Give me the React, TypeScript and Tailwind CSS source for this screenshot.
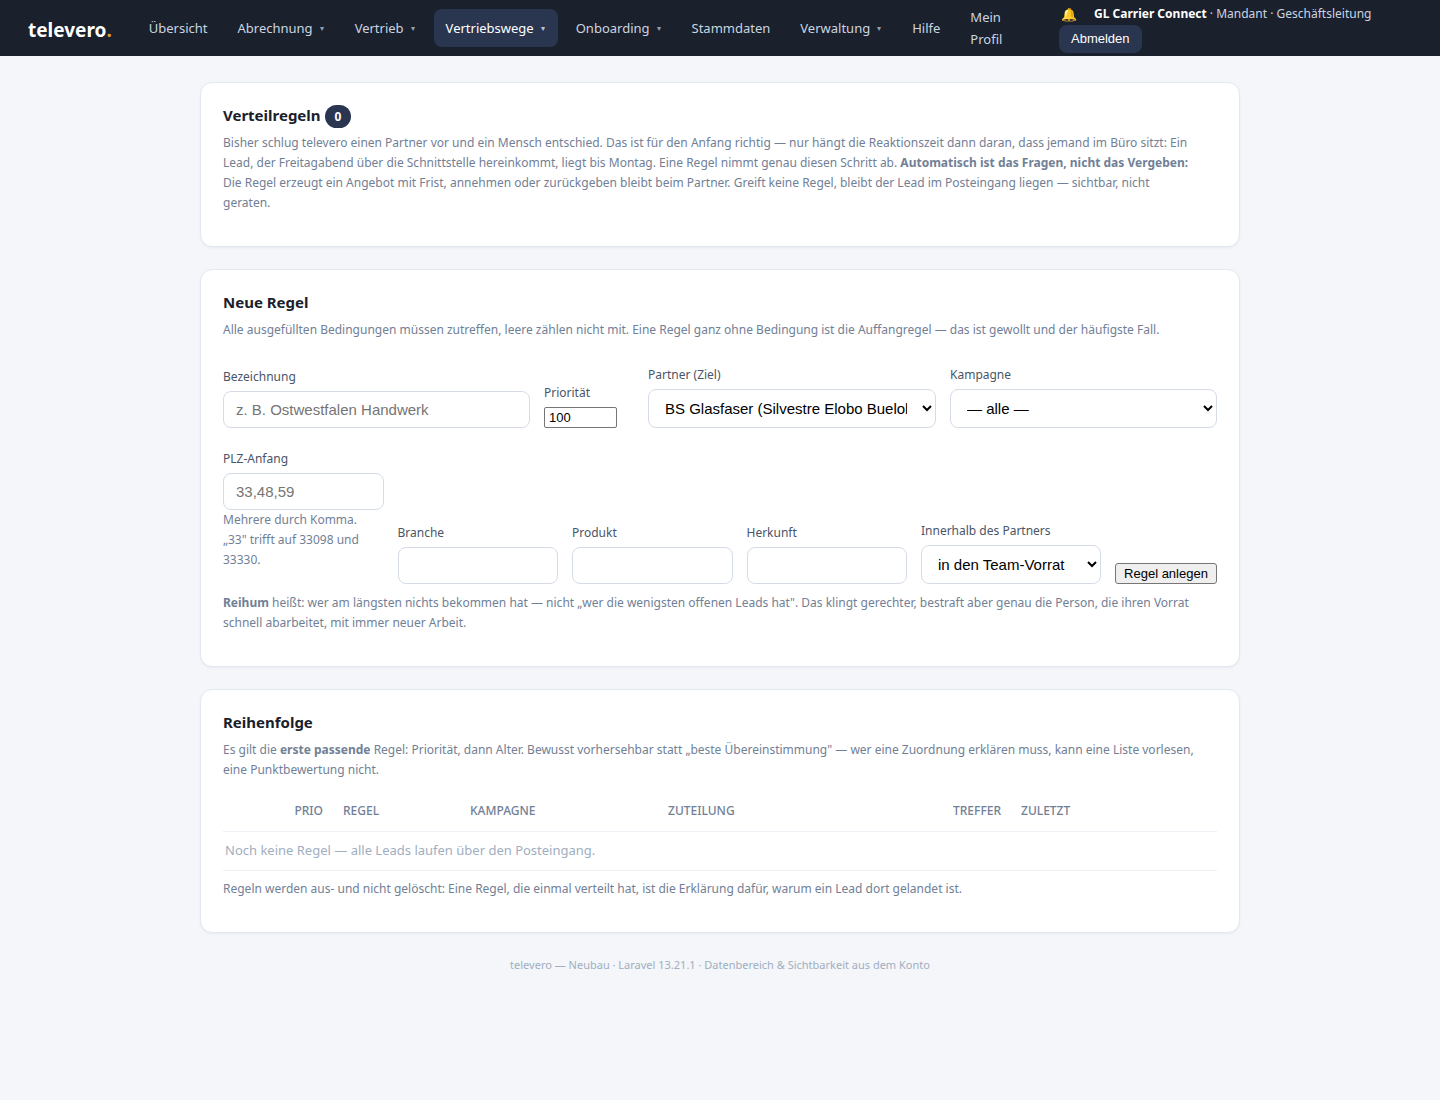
import React, { useState } from 'react';

interface NavItem {
  label: string;
  menu?: boolean;
  active?: boolean;
}

const navItems: NavItem[] = [
  { label: 'Übersicht' },
  { label: 'Abrechnung', menu: true },
  { label: 'Vertrieb', menu: true },
  { label: 'Vertriebswege', menu: true, active: true },
  { label: 'Onboarding', menu: true },
  { label: 'Stammdaten' },
  { label: 'Verwaltung', menu: true },
  { label: 'Hilfe' },
  { label: 'Mein Profil' },
];

const control = 'w-full border border-[#d5dbe7] rounded-lg bg-white font-["Liberation_Sans",Arial,sans-serif] text-[15px] text-black';
const textInput = `${control} h-[37px] px-3 placeholder:text-[#757575]`;
const selectInput = `${control} h-[39px] px-3`;

const Header: React.FC = () => (
  <header className="bg-[#1a202c] min-h-14 px-7 flex items-center text-[#cbd5e0]">
    <a href="#" className="text-[19px] leading-6 font-bold text-white mr-[25px] mt-1">
      televero<span className="text-[#d69e2e]">.</span>
    </a>
    <nav className="flex items-center gap-1.5 text-[13px] leading-[22px]">
      {navItems.map(item =>
        item.menu ? (
          <button
            key={item.label}
            className={`flex items-center gap-1.5 rounded-lg px-3 py-2 ${item.active ? 'bg-[#2a3550] text-white' : ''}`}
          >
            {item.label}
            <span className="w-1.5 text-[8px] opacity-70">▾</span>
          </button>
        ) : (
          <a key={item.label} href="#" className={`px-3 ${item.label === 'Mein Profil' ? 'w-16' : ''}`}>
            {item.label}
          </a>
        )
      )}
    </nav>
    <div className="ml-auto w-[353px] text-[12px] leading-5">
      <div className="flex items-center h-[22px]">
        <a href="#" aria-label="Benachrichtigungen" className="w-[35px] pl-0.5 text-[13px]">🔔</a>
        <span>
          <b className="text-white">GL Carrier Connect</b> · Mandant · Geschäftsleitung
        </span>
      </div>
      <button className='block h-7 px-3 rounded-lg bg-[#2a3550] text-white font-["Liberation_Sans",Arial,sans-serif] text-[13px]'>
        Abmelden
      </button>
    </div>
  </header>
);

const Card: React.FC<{ title: string; count?: number; children: React.ReactNode }> = ({ title, count, children }) => (
  <section className="bg-white border border-[#e2e8f0] rounded-xl px-[22px] pt-[22px] pb-[33px] shadow-[0_1px_2px_rgba(26,32,44,0.05)]">
    <h2 className="flex items-start gap-1 h-[23px] mb-[5px] text-[15px] leading-[21px] font-bold text-[#1a202c]">
      {title}
      {count !== undefined && (
        <span className="rounded-full bg-[#2a3550] text-white text-[12px] leading-[23px] px-2.5">{count}</span>
      )}
    </h2>
    {children}
  </section>
);

const Hint: React.FC<{ children: React.ReactNode }> = ({ children }) => (
  <p className="text-[12px] leading-5 text-[#718096]">{children}</p>
);

const Field: React.FC<{ id: string; label: string; children: React.ReactNode }> = ({ id, label, children }) => (
  <div className="min-w-0">
    <label htmlFor={id} className="block text-[12px] leading-5 mb-1 text-[#4a5568]">
      {label}
    </label>
    {children}
  </div>
);

const RuleForm: React.FC = () => {
  const [priority, setPriority] = useState('100');

  return (
    <form onSubmit={e => e.preventDefault()} className="mt-[25px] mb-[9px]">
      <div className="grid grid-cols-[307fr_90px_288fr_267fr] gap-3.5 items-end mb-[21px]">
        <Field id="name" label="Bezeichnung">
          <input id="name" type="text" placeholder="z. B. Ostwestfalen Handwerk" className={textInput} />
        </Field>
        <Field id="priority" label="Priorität">
          <input
            id="priority"
            type="number"
            value={priority}
            onChange={e => setPriority(e.target.value)}
            className='block w-[73px] h-[21px] px-1 border border-[#767676] rounded-xs bg-white text-black font-["Liberation_Sans",Arial,sans-serif] text-[13px]'
          />
        </Field>
        <Field id="partner" label="Partner (Ziel)">
          <select id="partner" className={selectInput}>
            <option>BS Glasfaser (Silvestre Elobo Buelobe)</option>
          </select>
        </Field>
        <Field id="campaign" label="Kampagne">
          <select id="campaign" className={selectInput}>
            <option>— alle —</option>
          </select>
        </Field>
      </div>

      <div className="grid grid-cols-[repeat(4,minmax(0,1fr))_180px_auto] gap-3.5 items-end">
        <div className="pb-3.5">
          <Field id="zip" label="PLZ-Anfang">
            <input id="zip" type="text" placeholder="33,48,59" className={textInput} />
          </Field>
          <Hint>Mehrere durch Komma. „33" trifft auf 33098 und 33330.</Hint>
        </div>
        <Field id="industry" label="Branche">
          <input id="industry" type="text" className={textInput} />
        </Field>
        <Field id="product" label="Produkt">
          <input id="product" type="text" className={textInput} />
        </Field>
        <Field id="origin" label="Herkunft">
          <input id="origin" type="text" className={textInput} />
        </Field>
        <Field id="within" label="Innerhalb des Partners">
          <select id="within" className={selectInput}>
            <option>in den Team-Vorrat</option>
          </select>
        </Field>
        <button
          type="submit"
          className='w-[102px] h-[21px] border border-[#767676] rounded-[3px] bg-[#efefef] text-black font-["Liberation_Sans",Arial,sans-serif] text-[13px] leading-4 whitespace-nowrap'
        >
          Regel anlegen
        </button>
      </div>
    </form>
  );
};

const RuleTable: React.FC = () => (
  <table className="w-full table-fixed mt-3 mb-2 border-collapse">
    <colgroup>
      <col className="w-[50px]" />
      <col className="w-[60px]" />
      <col className="w-[127px]" />
      <col className="w-[198px]" />
      <col className="w-[284px]" />
      <col className="w-[69px]" />
      <col />
    </colgroup>
    <thead>
      <tr className="h-[39px] border-b border-[#edf0f5] text-left text-[12px] text-[#718096] *:px-2.5 *:font-medium">
        <th></th>
        <th className="text-right">PRIO</th>
        <th>REGEL</th>
        <th>KAMPAGNE</th>
        <th>ZUTEILUNG</th>
        <th className="text-right">TREFFER</th>
        <th>ZULETZT</th>
      </tr>
    </thead>
    <tbody>
      <tr className="h-[39px] border-b border-[#edf0f5]">
        <td colSpan={7} className="px-0.5 text-[13px] text-[#a0aec0]">
          Noch keine Regel — alle Leads laufen über den Posteingang.
        </td>
      </tr>
    </tbody>
  </table>
);

const App: React.FC = () => (
  <div className='min-h-screen bg-[#f4f6fa] font-["Noto_Sans",sans-serif]'>
    <Header />

    <main className="max-w-[1040px] mx-auto pt-[26px] flex flex-col gap-[22px]">
      <Card title="Verteilregeln" count={0}>
        <div className="pr-6">
          <Hint>
            Bisher schlug televero einen Partner vor und ein Mensch entschied. Das ist für den Anfang richtig — nur
            hängt die Reaktionszeit dann daran, dass jemand im Büro sitzt: Ein Lead, der Freitagabend über die
            Schnittstelle hereinkommt, liegt bis Montag. Eine Regel nimmt genau diesen Schritt ab.{' '}
            <b>Automatisch ist das Fragen, nicht das Vergeben:</b> Die Regel erzeugt ein Angebot mit Frist, annehmen
            oder zurückgeben bleibt beim Partner. Greift keine Regel, bleibt der Lead im Posteingang liegen — sichtbar,
            nicht geraten.
          </Hint>
        </div>
      </Card>

      <Card title="Neue Regel">
        <Hint>
          Alle ausgefüllten Bedingungen müssen zutreffen, leere zählen nicht mit. Eine Regel ganz ohne Bedingung ist die
          Auffangregel — das ist gewollt und der häufigste Fall.
        </Hint>
        <RuleForm />
        <Hint>
          <b>Reihum</b> heißt: wer am längsten nichts bekommen hat — nicht „wer die wenigsten offenen Leads hat". Das
          klingt gerechter, bestraft aber genau die Person, die ihren Vorrat schnell abarbeitet, mit immer neuer Arbeit.
        </Hint>
      </Card>

      <Card title="Reihenfolge">
        <Hint>
          Es gilt die <b>erste passende</b> Regel: Priorität, dann Alter. Bewusst vorhersehbar statt „beste
          Übereinstimmung" — wer eine Zuordnung erklären muss, kann eine Liste vorlesen, eine Punktbewertung nicht.
        </Hint>
        <RuleTable />
        <Hint>
          Regeln werden aus- und nicht gelöscht: Eine Regel, die einmal verteilt hat, ist die Erklärung dafür, warum ein
          Lead dort gelandet ist.
        </Hint>
      </Card>
    </main>

    <footer className="py-[22px] text-center text-[11px] leading-5 text-[#a0aec0]">
      televero — Neubau · Laravel 13.21.1 · Datenbereich &amp; Sichtbarkeit aus dem Konto
    </footer>
  </div>
);

export default App;
